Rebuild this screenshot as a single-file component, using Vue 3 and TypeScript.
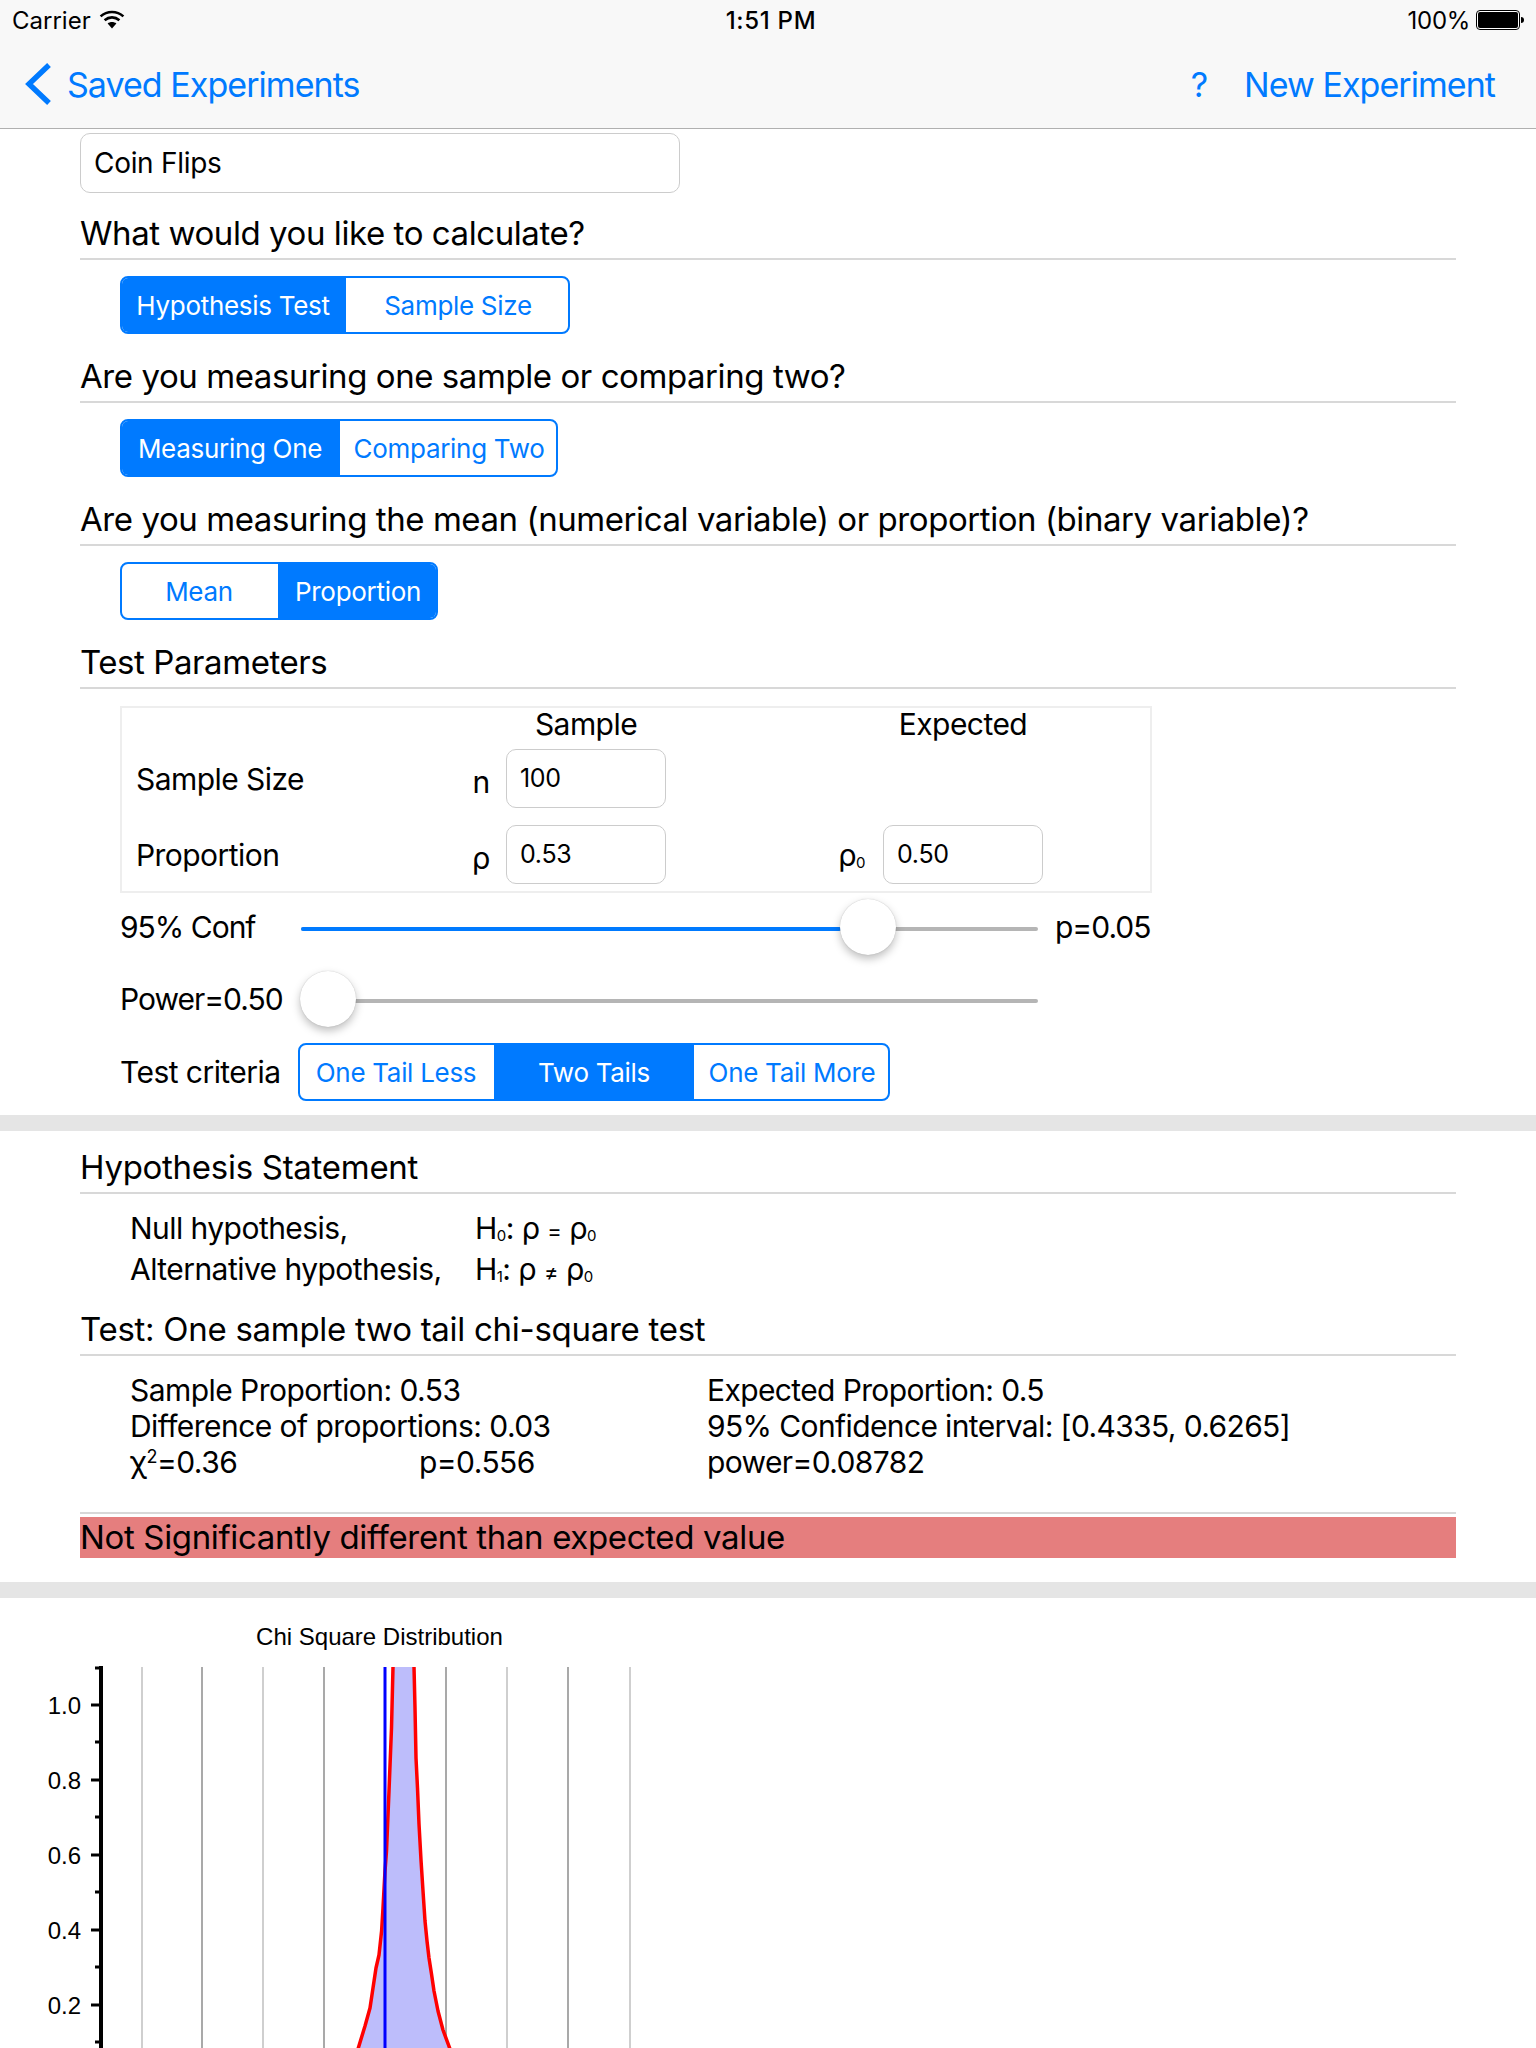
<script setup lang="ts">
interface Seg { label: string; on: boolean; width: number }
const calc: Seg[] = [
  { label: 'Hypothesis Test', on: true, width: 226 },
  { label: 'Sample Size', on: false, width: 224 }
]
const sample: Seg[] = [
  { label: 'Measuring One', on: true, width: 220 },
  { label: 'Comparing Two', on: false, width: 218 }
]
const kind: Seg[] = [
  { label: 'Mean', on: false, width: 158 },
  { label: 'Proportion', on: true, width: 160 }
]
const tails: Seg[] = [
  { label: 'One Tail Less', on: false, width: 196 },
  { label: 'Two Tails', on: true, width: 200 },
  { label: 'One Tail More', on: false, width: 196 }
]
const grid: { x: number; dark: boolean }[] = [
  { x: 142, dark: false }, { x: 202, dark: true }, { x: 263, dark: false }, { x: 324, dark: true },
  { x: 446, dark: true }, { x: 507, dark: false }, { x: 568, dark: true }, { x: 630, dark: false }
]
const top = 1597
const major = [1704, 1779, 1854, 1929, 2004].map((y, i) => ({ y: y - top, label: (1 - i * 0.2).toFixed(1) }))
const minor = [1667, 1741, 1816, 1891, 1966, 2041].map((y) => y - top)
const left: [number, number][] = [
  [393, 69], [391.5, 130], [389, 193], [386.5, 253], [385, 273], [383, 310], [381.6, 333],
  [379, 357], [376, 370], [373, 390], [370, 410], [365, 428], [358, 451], [354, 462]
]
const right: [number, number][] = [
  [414, 69], [415, 110], [416, 160], [417.5, 190], [419, 226], [421, 262], [423, 293],
  [425, 323], [427, 343], [429, 360], [431.5, 376], [434, 393], [438, 413], [443, 432], [450, 451], [454, 462]
]
const toPoints = (pts: [number, number][]): string => pts.map((p) => p.join(',')).join(' ')
const leftPts = toPoints(left)
const rightPts = toPoints(right)
const fillPts = toPoints([...left, ...[...right].reverse()])
</script>

<template>
  <div class="page">
    <header class="bar">
      <div class="status">
        <div class="status-left">
          <span>Carrier</span>
          <svg class="wifi" width="26" height="19" viewBox="0 0 26 19">
            <path d="M1.6 6.4 C8 0.6 18 0.6 24.4 6.4" fill="none" stroke="#000" stroke-width="2.6" />
            <path d="M5.6 10.2 C10 6.4 16 6.4 20.4 10.2" fill="none" stroke="#000" stroke-width="2.6" />
            <path d="M13 18.6 L8.6 13.6 C11 11.6 15 11.6 17.4 13.6 Z" fill="#000" />
          </svg>
        </div>
        <span class="time">1:51 PM</span>
        <div class="status-right">
          <span class="pct">100%</span>
          <svg width="50" height="20" viewBox="0 0 50 20">
            <rect x="0.5" y="0.5" width="43" height="19" rx="3.5" fill="#fff" stroke="#000" />
            <rect x="2" y="2" width="40" height="16" rx="2" fill="#000" />
            <path d="M45 7 C47 7 48 8 48 10 C48 12 47 13 45 13 Z" fill="#000" />
          </svg>
        </div>
      </div>
      <nav class="nav">
        <div class="nav-left">
          <svg class="chev" width="28" height="44" viewBox="0 0 28 44">
            <path d="M25 3 L5 22 L25 41" fill="none" stroke="#007aff" stroke-width="5.4" />
          </svg>
          <span>Saved Experiments</span>
        </div>
        <div class="nav-right">
          <span class="help">?</span>
          <span>New Experiment</span>
        </div>
      </nav>
    </header>

    <section class="block first">
      <div class="title-field">Coin Flips</div>
      <h2 class="heading h-calc">What would you like to calculate?</h2>
      <div class="seg indent s1">
        <div v-for="s in calc" :key="s.label" class="seg-item" :class="{ on: s.on }" :style="{ width: s.width + 'px' }">{{ s.label }}</div>
      </div>
      <h2 class="heading h-next">Are you measuring one sample or comparing two?</h2>
      <div class="seg indent s1">
        <div v-for="s in sample" :key="s.label" class="seg-item" :class="{ on: s.on }" :style="{ width: s.width + 'px' }">{{ s.label }}</div>
      </div>
      <h2 class="heading h-next">Are you measuring the mean (numerical variable) or proportion (binary variable)?</h2>
      <div class="seg indent s1">
        <div v-for="s in kind" :key="s.label" class="seg-item" :class="{ on: s.on }" :style="{ width: s.width + 'px' }">{{ s.label }}</div>
      </div>
      <h2 class="heading h-next">Test Parameters</h2>

      <div class="params">
        <div class="cell c3 head">Sample</div>
        <div class="cell c5 head">Expected</div>
        <div class="cell c1 r2">Sample Size</div>
        <div class="cell c2 r2 sym">n</div>
        <div class="input c3 r2">100</div>
        <div class="cell c1 r3">Proportion</div>
        <div class="cell c2 r3 sym">ρ</div>
        <div class="input c3 r3">0.53</div>
        <div class="cell c4 r3 sym2">ρ<span class="sub">0</span></div>
        <div class="input c5 r3">0.50</div>
      </div>

      <div class="ctl first-ctl">
        <span class="ctl-label tight">95% Conf</span>
        <div class="slider">
          <div class="track gray"></div>
          <div class="track blue"></div>
          <div class="thumb t1"></div>
        </div>
        <span class="ctl-end tight">p=0.05</span>
      </div>
      <div class="ctl">
        <span class="ctl-label tight">Power=0.50</span>
        <div class="slider">
          <div class="track gray"></div>
          <div class="thumb t2"></div>
        </div>
      </div>
      <div class="ctl crit">
        <span class="ctl-label">Test criteria</span>
        <div class="seg tails">
          <div v-for="s in tails" :key="s.label" class="seg-item" :class="{ on: s.on }" :style="{ width: s.width + 'px' }">{{ s.label }}</div>
        </div>
      </div>
    </section>

    <div class="band"></div>

    <section class="block results">
      <h2 class="heading">Hypothesis Statement</h2>
      <div class="hyp">
        <span>Null hypothesis,</span>
        <span>H<span class="sub">0</span>: ρ <span class="op">=</span> ρ<span class="sub">0</span></span>
        <span>Alternative hypothesis,</span>
        <span>H<span class="sub">1</span>: ρ <span class="op">≠</span> ρ<span class="sub">0</span></span>
      </div>
      <h2 class="heading h-test">Test: One sample two tail chi-square test</h2>
      <div class="stats">
        <div class="stat-left">
          <div>Sample Proportion: 0.53</div>
          <div>Difference of proportions: 0.03</div>
          <div class="chi"><span class="chi-val">χ<sup>2</sup>=0.36</span><span>p=0.556</span></div>
        </div>
        <div class="stat-right">
          <div>Expected Proportion: 0.5</div>
          <div>95% Confidence interval: [0.4335, 0.6265]</div>
          <div>power=0.08782</div>
        </div>
      </div>
      <div class="rule"></div>
      <div class="verdict">Not Significantly different than expected value</div>
    </section>

    <div class="band second"></div>

    <section class="chart">
      <div class="chart-title">Chi Square Distribution</div>
      <svg class="plot" width="1536" height="462" viewBox="0 0 1536 462">
        <line v-for="g in grid" :key="g.x" :x1="g.x" :x2="g.x" y1="69" y2="462" :stroke="g.dark ? '#a9a9a9' : '#cfcfcf'" stroke-width="2" />
        <polygon :points="fillPts" fill="#bdbdfb" />
        <polyline :points="leftPts" fill="none" stroke="#ff0000" stroke-width="3.5" stroke-linejoin="round" />
        <polyline :points="rightPts" fill="none" stroke="#ff0000" stroke-width="3.5" stroke-linejoin="round" />
        <line x1="385" x2="385" y1="69" y2="462" stroke="#0000ff" stroke-width="3" />
        <line x1="101" x2="101" y1="68" y2="462" stroke="#000" stroke-width="4" />
        <line v-for="y in minor" :key="y" x1="95" x2="101" :y1="y" :y2="y" stroke="#000" stroke-width="3" />
        <g v-for="m in major" :key="m.label">
          <line x1="91" x2="101" :y1="m.y" :y2="m.y" stroke="#000" stroke-width="3" />
          <text class="tick" x="81" :y="m.y + 9" text-anchor="end">{{ m.label }}</text>
        </g>
      </svg>
    </section>
  </div>
</template>

<style scoped>
.page {
  width: 1536px;
  height: 2048px;
  overflow: hidden;
  background: #fff;
  color: #000;
  font-family: Inter, "Liberation Sans", sans-serif;
  font-size: 30px;
  letter-spacing: -0.55px;
}
.bar {
  height: 129px;
  box-sizing: border-box;
  background: #f8f8f8;
  border-bottom: 1px solid #b0b0b0;
}
.status {
  height: 40px;
  padding: 0 10px 0 12px;
  display: grid;
  grid-template-columns: 1fr auto 1fr;
  align-items: center;
  font-size: 24px;
  letter-spacing: 0;
}
.status-left { display: flex; align-items: center; gap: 8px; }
.wifi { margin-top: -1px; }
.time { font-weight: 500; margin-left: 4px; letter-spacing: 0.7px; }
.status-right { display: flex; justify-content: flex-end; align-items: center; gap: 6px; }
.pct { letter-spacing: -0.3px; }
.nav {
  height: 88px;
  padding: 0 41px 0 24px;
  display: flex;
  justify-content: space-between;
  align-items: center;
  color: #007aff;
  font-size: 34px;
  letter-spacing: -0.95px;
}
.nav-left { display: flex; align-items: center; gap: 15px; }
.nav-right { display: flex; align-items: center; gap: 37px; }
.block { padding: 0 80px; }
.first { padding-top: 4px; height: 986px; box-sizing: border-box; }
.title-field {
  width: 600px;
  height: 60px;
  box-sizing: border-box;
  border: 1px solid #ccc;
  border-radius: 10px;
  padding-left: 13px;
  line-height: 58px;
  font-size: 28px;
  letter-spacing: -0.3px;
}
.heading {
  margin: 0;
  height: 47px;
  box-sizing: border-box;
  border-bottom: 2px solid #d8d8d8;
  font-size: 33px;
  font-weight: 400;
  line-height: 40px;
  letter-spacing: -0.43px;
}
.results .heading { letter-spacing: -0.28px; }
.h-calc { margin-top: 20px; }
.h-next { margin-top: 22px; }
.seg {
  display: inline-flex;
  box-sizing: border-box;
  height: 58px;
  border: 2px solid #007aff;
  border-radius: 8px;
  overflow: hidden;
  color: #007aff;
  font-size: 26px;
  letter-spacing: -0.3px;
}
.indent { margin-left: 40px; }
.s1 { display: flex; width: fit-content; margin-top: 16px; }
.seg-item {
  box-sizing: border-box;
  display: flex;
  align-items: center;
  justify-content: center;
  white-space: nowrap;
}
.seg .seg-item:first-child { margin-left: -2px; }
.seg .seg-item:last-child { margin-right: -2px; }
.seg-item.on { background: #007aff; color: #fff; }

.params {
  margin: 17px 0 0 40px;
  width: 1032px;
  height: 187px;
  box-sizing: border-box;
  border: 2px solid #eeeeee;
  padding-left: 14px;
  display: grid;
  grid-template-columns: 329px 41px 160px 217px 160px;
  grid-template-rows: 41px 59px 17px 59px;
  align-items: center;
}
.c1 { grid-column: 1; }
.c2 { grid-column: 2; }
.c3 { grid-column: 3; }
.c4 { grid-column: 4; }
.c5 { grid-column: 5; }
.r2 { grid-row: 2; }
.r3 { grid-row: 4; }
.head { grid-row: 1; text-align: center; line-height: 32px; margin-top: -10px; }
.sym { text-align: center; padding-right: 9px; padding-top: 6px; }
.sym2 { text-align: right; padding-right: 18px; }
.input {
  height: 59px;
  box-sizing: border-box;
  border: 1px solid #ccc;
  border-radius: 10px;
  padding: 0 0 2px 13px;
  display: flex;
  align-items: center;
  font-size: 25px;
  letter-spacing: -0.3px;
}
.sub { font-size: 15px; vertical-align: -2px; }
.op { font-size: 22px; }

.ctl {
  display: flex;
  align-items: center;
  height: 56px;
  margin: 16px 0 0 40px;
}
.first-ctl { margin-top: 6px; }
.ctl-label { width: 181px; white-space: nowrap; }
.tight { letter-spacing: -1px; }
.crit { height: 58px; }
.tails { margin-left: -3px; }
.slider { position: relative; width: 737px; height: 56px; }
.track { position: absolute; left: 0; top: 28px; height: 4px; border-radius: 2px; }
.gray { width: 737px; background: #b5b5b5; }
.blue { width: 540px; background: #007aff; }
.thumb {
  position: absolute;
  top: 0;
  width: 56px;
  height: 56px;
  border-radius: 50%;
  background: #fff;
  box-shadow: 0 4px 8px rgba(0, 0, 0, 0.25), 0 0 1px rgba(0, 0, 0, 0.25);
}
.t1 { left: 539px; }
.t2 { left: -1px; }
.ctl-end { margin-left: 17px; }

.band { height: 16px; background: #e5e5e5; }
.second { margin-top: 24px; }
.results { padding-top: 16px; }
.hyp {
  margin: 13px 0 0 50px;
  display: grid;
  grid-template-columns: 345px 1fr;
  grid-auto-rows: 41px;
  align-items: center;
}
.h-test { margin-top: 20px; }
.stats {
  margin: 16px 0 0 50px;
  display: grid;
  grid-template-columns: 577px 1fr;
  line-height: 36px;
}
.stat-right { letter-spacing: -0.62px; }
.chi { display: flex; }
.chi-val { width: 289px; }
sup { font-size: 18px; line-height: 0; vertical-align: 10px; }
.rule { margin-top: 32px; height: 2px; background: #d8d8d8; }
.verdict {
  margin-top: 3px;
  height: 41px;
  line-height: 41px;
  font-size: 33px;
  letter-spacing: -0.35px;
  background: #e57e7e;
}
.chart { position: relative; height: 462px; overflow: hidden; }
.chart-title {
  width: 759px;
  padding-top: 24px;
  height: 45px;
  box-sizing: border-box;
  text-align: center;
  font: 24px/30px "Liberation Sans", sans-serif;
  letter-spacing: 0;
}
.plot { position: absolute; left: 0; top: 0; display: block; }
.tick { font: 24px "Liberation Sans", sans-serif; fill: #000; letter-spacing: 0; }
</style>

<style>
html, body { margin: 0; background: #fff; }
</style>
